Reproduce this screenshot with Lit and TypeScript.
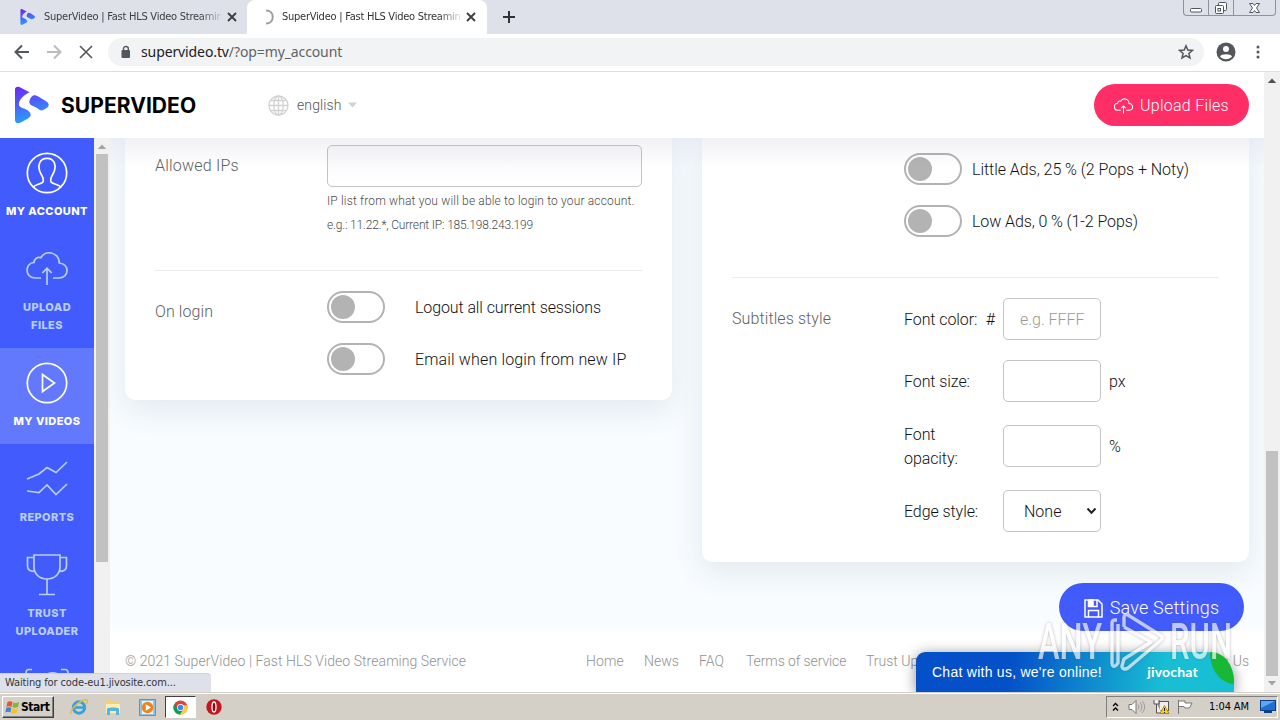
import { LitElement, html, css, svg } from "lit";
import { customElement, property } from "lit/decorators.js";

const logoMark = (id: string) => svg`
  <defs><linearGradient id=${id} gradientUnits="userSpaceOnUse" x1="8" y1="0" x2="18" y2="36">
    <stop offset="0" stop-color="#6a2cf5"/><stop offset=".5" stop-color="#4b64fb"/><stop offset="1" stop-color="#22a6fc"/>
  </linearGradient></defs>
  <path fill="url(#${id})" d="M0 3C0 .6 2.200-.4 4.500.5L15 6C9.500 8.500 4.500 13 4 18C4 22 9 22 13 24.500C17.500 28 17 31 12.500 33.500L6 37C2.500 38.600 0 37.500 0 34.500Z"/>
  <path fill="url(#${id})" d="M18.500 9.500C20.500 8.300 22 9.500 24 10.300L32 15.200C35.500 17.500 35.500 20.500 32.500 22.200C29 24.500 27 25.200 25 24C22 21 18 20.500 16 18.800C13.500 16.500 15 11.500 18.500 9.500Z"/>`;

const cloud = svg`
  <path d="M15 27H9.500C4.500 27 1 23.600 1 19.300C1 14.800 4 11.700 8 11.500C8.300 7.800 11.500 5.500 14.800 6.800C17.200 2.800 21 1.200 25 2C30 3 33 6.500 33.300 12C38.400 12.700 41 15.800 41 19.800C41 24 37.700 27 33 27H27"/>
  <path d="M21 34V17.500M16.300 22L21 17.300L25.700 22"/>`;

const sideIcons = {
  account: svg`<circle cx="21" cy="21" r="19.700"/><path d="M7 35C10 31.800 16.500 32.500 17.300 29C17.800 26 16.500 24.500 15 22C13 18.500 12.700 13.500 13.600 11C14.800 8 17.500 6.300 21 6.300S27.200 8 28.400 11C29.300 13.500 29 18.500 27 22C25.500 24.500 24.200 26 24.700 29C25.500 32.500 32 31.800 35 35"/>`,
  upload: svg`<g transform="translate(0 3)">${cloud}</g>`,
  videos: svg`<circle cx="21" cy="21" r="19.700"/><path d="M16.500 12.500L28.500 21L16.500 29.500Z"/>`,
  reports: svg`<path d="M1 21L13 16L21 9.500L30 14.500L41 4M1 33L13 34.500L21 27L30 36.500L41 26"/>`,
  trophy: svg`<path d="M8 1H34V13C34 20 28.500 25 21 25S8 20 8 13ZM8 3.500H1.500V12C1.500 15.500 4 17.500 9 17.500M34 3.500H40.500V12C40.500 15.500 38 17.500 33 17.500M21 25V40M13 40.500H29"/>`,
  scan: svg`<path d="M0 9V4.500C0 2.500 1 1.500 3 1.500H6M35 1.500H39C41 1.500 42 2.500 42 4.500V9M3 9C8 6 12 9 21 6S34 7 38 9"/>`,
};
type IconName = keyof typeof sideIcons;

@customElement("side-item")
class SideItem extends LitElement {
  @property() icon: IconName = "account";
  @property() label = "";
  @property({ type: Boolean }) bright = false;
  static styles = css`
    :host { display: flex; flex-direction: column; align-items: center; padding: 14px 0; gap: 8px; color: #b9ceff; flex: none; }
    :host([bright]) { color: #fff; }
    svg { width: 42px; height: 42px; fill: none; stroke: currentColor; stroke-width: 1.7; overflow: visible; }
    .label { font: 800 11px/18px Inter, sans-serif; letter-spacing: .42px; text-align: center; white-space: pre-line; }
  `;
  render() {
    return html`<svg viewBox="0 0 42 42">${sideIcons[this.icon]}</svg><div class="label">${this.label}</div>`;
  }
}

@customElement("toggle-row")
class ToggleRow extends LitElement {
  @property() label = "";
  @property({ type: Boolean }) wide = false;
  static styles = css`
    :host { display: flex; align-items: center; gap: 10px; height: 32px; white-space: nowrap; letter-spacing: -.04px; }
    :host([wide]) { gap: 30px; }
    .track { box-sizing: border-box; width: 58px; height: 32px; border: 2px solid #b3b3b3; border-radius: 16px; padding: 2px; background: #fff; flex: none; }
    .knob { width: 24px; height: 24px; border-radius: 50%; background: #b3b3b3; }
    .text { padding-top: 2px; }
  `;
  render() {
    return html`<div class="track"><div class="knob"></div></div><span class="text">${this.label}</span>`;
  }
}

@customElement("scroll-bar")
class ScrollBar extends LitElement {
  static styles = css`
    :host { display: flex; flex-direction: column; align-items: center; width: 16px; flex: none; background: #f1f1f1; }
    .arrow { width: 16px; height: 16px; flex: none; }
    .track { flex: 1; width: 12px; }
    .thumb { background: #c1c1c1; }
  `;
  @property({ type: Number }) from = 0;
  @property({ type: Number }) size = 0;
  @property() tone = "#505050";
  @property() endTone = "#a3a3a3";
  render() {
    return html`
      <svg class="arrow" viewBox="0 0 16 16"><path fill=${this.tone} d="M3.800 11L8 6.500L12.200 11Z"/></svg>
      <div class="track"><div style="height:${this.from}px"></div><div class="thumb" style="height:${this.size}px"></div></div>
      <svg class="arrow" viewBox="0 0 16 16"><path fill=${this.endTone} d="M3.800 5L8 9.500L12.200 5Z"/></svg>`;
  }
}

@customElement("browser-chrome")
class BrowserChrome extends LitElement {
  static styles = css`
    :host { display: block; height: 72px; flex: none; }
    .tabs { height: 34px; background: #dee1e9; display: flex; padding-left: 8px; position: relative; }
    .tab { box-sizing: border-box; width: 239px; height: 34px; display: flex; align-items: center; padding: 0 10px 0 12px; gap: 8px;
      font: 11px/16px "DejaVu Sans Condensed", "DejaVu Sans", sans-serif; letter-spacing: -.24px; color: #3c4043; }
    .tab.active { width: 240px; background: #fff; border-radius: 8px 8px 0 0; color: #303236; padding: 0 11px 0 15px; }
    .title { flex: 1; overflow: hidden; white-space: nowrap; -webkit-mask: linear-gradient(90deg, #000 88%, transparent 102%); mask: linear-gradient(90deg, #000 88%, transparent 102%); }
    .tab svg { flex: none; }
    .tab .title + svg { margin-left: -2px; }
    .plus { align-self: center; margin-left: 15px; }
    .win { position: absolute; right: 4px; top: 0; height: 16px; box-sizing: border-box; display: flex; border: 1px solid #8e929b; border-top: 0; border-radius: 0 0 4px 4px; }
    .win svg { display: block; height: 15px; }
    .win svg + svg { border-left: 1px solid #8e929b; }
    .bar { box-sizing: border-box; height: 38px; border-bottom: 1px solid #dcdde0; background: #fff; display: flex; align-items: center; padding: 0 14px 1px 14px; }
    .nav { display: flex; gap: 16px; margin-right: 14px; }
    .omni { box-sizing: border-box; flex: 1; height: 28px; border-radius: 14px; background: #f1f3f4; display: flex; align-items: center; padding: 0 10px 0 12px; gap: 9px;
      font: 14px/20px "Noto Sans", sans-serif; letter-spacing: -.11px; color: #5f6368; }
    .url { flex: 1; padding-bottom: 1px; }
    .host { color: #202124; }
    .user { margin: 0 14px 0 12px; }
  `;
  render() {
    const x = html`<svg width="10" height="10" viewBox="0 0 10 10" stroke="#3c4043" stroke-width="1.900"><path d="M1 1L9 9M9 1L1 9"/></svg>`;
    return html`
      <div class="tabs">
        <div class="tab">
          <svg width="16" height="16" viewBox="0 0 36 38">${logoMark("fav")}</svg>
          <span class="title">SuperVideo | Fast HLS Video Streaming</span>${x}
        </div>
        <div class="tab active">
          <svg width="12" height="16" viewBox="0 0 12 16" fill="none" stroke="#9aa0a6" stroke-width="2"><path d="M4 1.500C13 1.500 13 14.500 4 14.500"/></svg>
          <span class="title">SuperVideo | Fast HLS Video Streaming</span>${x}
        </div>
        <svg class="plus" width="14" height="14" viewBox="0 0 14 14" stroke="#303236" stroke-width="2"><path d="M7 1V13M1 7H13"/></svg>
        <div class="win">
          <svg width="24" viewBox="0 0 24 15" fill="#fff" stroke="#50545c"><rect x="6.500" y="8.500" width="11" height="3.500" rx="1"/></svg>
          <svg width="24" viewBox="0 0 24 15" fill="#fff" stroke="#50545c"><rect x="9.500" y="2.500" width="8" height="8" rx="1"/><rect x="6.500" y="5.500" width="8" height="8" rx="1"/><rect x="9" y="8.500" width="2.500" height="2.500"/></svg>
          <svg width="41" viewBox="0 0 41 15" fill="#fff" stroke="#50545c"><path d="M15.500 3.500H19L20.500 5.500L22 3.500H25.500L22.500 8L25.500 12.500H22L20.500 10.500L19 12.500H15.500L18.500 8Z"/></svg>
        </div>
      </div>
      <div class="bar">
        <div class="nav">
          <svg width="16" height="16" viewBox="0 0 16 16" fill="none" stroke="#53565a" stroke-width="2"><path d="M15 8H2M8 1.500L1.500 8L8 14.500"/></svg>
          <svg width="16" height="16" viewBox="0 0 16 16" fill="none" stroke="#b9bbbe" stroke-width="2"><path d="M1 8H14M8 1.500L14.500 8L8 14.500"/></svg>
          <svg width="16" height="16" viewBox="0 0 16 16" fill="none" stroke="#53565a" stroke-width="1.600"><path d="M2 2L14 14M14 2L2 14"/></svg>
        </div>
        <div class="omni">
          <svg width="12" height="14" viewBox="0 0 12 14"><rect x="1.500" y="5" width="8.500" height="8" rx="1" fill="#53565a"/><path d="M3.500 6V3.600C3.500 .8 8.300 .8 8.300 3.600V6" fill="none" stroke="#53565a" stroke-width="1.400"/></svg>
          <span class="url"><span class="host">supervideo.tv</span>/?op=my_account</span>
          <svg width="16" height="16" viewBox="0 0 16 16" fill="none" stroke="#53565a" stroke-width="1.500"><path d="M8 1.800L9.800 6L14.400 6.400L10.900 9.400L12 13.900L8 11.500L4 13.900L5.100 9.400L1.600 6.400L6.200 6Z"/></svg>
        </div>
        <svg class="user" width="20" height="20" viewBox="0 0 20 20"><circle cx="10" cy="10" r="9.500" fill="#53565a"/><circle cx="10" cy="7" r="3" fill="#fff"/><path d="M4 14.500C5 11.500 15 11.500 16 14.500C13 18 7 18 4 14.500Z" fill="#fff"/></svg>
        <svg width="16" height="16" viewBox="0 0 16 16" fill="#53565a"><circle cx="8" cy="3" r="1.500"/><circle cx="8" cy="8" r="1.500"/><circle cx="8" cy="13" r="1.500"/></svg>
      </div>`;
  }
}

@customElement("site-header")
class SiteHeader extends LitElement {
  static styles = css`
    :host { display: flex; align-items: center; height: 66px; flex: none; padding: 0 15px; background: #fff; font: 300 14px/20px Roboto, sans-serif; }
    .mark { width: 35px; height: 38px; margin-right: 11px; }
    .name { font: 700 21px/26px Inter, sans-serif; color: #000; width: 207px; padding-top: 2px; letter-spacing: .06px; }
    .lang { display: flex; align-items: center; flex: 1; color: #555; letter-spacing: .1px; }
    .globe { margin-right: 8px; }
    .caret { margin-left: 7px; }
    .upload { box-sizing: border-box; width: 155px; height: 42px; border-radius: 21px; background: #ff2e66; color: #fff; display: flex; align-items: center; justify-content: center; gap: 7px; font-size: 16px; letter-spacing: .25px; padding-top: 1px; }
    .caption { padding-top: 1px; }
  `;
  render() {
    return html`
      <svg class="mark" viewBox="0 0 36 38">${logoMark("brand")}</svg>
      <div class="name">SUPERVIDEO</div>
      <div class="lang">
        <svg class="globe" width="21" height="21" viewBox="0 0 21 21" fill="none" stroke="#d2d2d2" stroke-width="1.300"><circle cx="10.500" cy="10.500" r="9.500"/><ellipse cx="10.500" cy="10.500" rx="4.700" ry="9.500"/><path d="M1 10.500H20M10.500 1V20M2.500 5.500H18.500M2.500 15.500H18.500"/></svg>
        english
        <svg class="caret" width="9" height="6" viewBox="0 0 9 6"><path fill="#d2d2d2" d="M0 .5H9L4.500 5.500Z"/></svg>
      </div>
      <div class="upload"><svg width="19" height="16" viewBox="0 0 42 35" fill="none" stroke="#fff" stroke-width="2.400">${cloud}</svg><span class="caption">Upload Files</span></div>`;
  }
}

@customElement("settings-content")
class SettingsContent extends LitElement {
  static styles = css`
    :host { flex: 1; min-width: 0; display: flex; flex-direction: column; position: relative; overflow: hidden; font: 300 16px/24px Roboto, sans-serif; color: #111; background: #fff; }
    .shade { position: absolute; inset: 0 0 auto 0; height: 30px; background: linear-gradient(rgba(60, 60, 110, .07), rgba(60, 60, 110, 0)); }
    .body { box-sizing: border-box; height: 494px; background: linear-gradient(#f8fcff 97%, #fcfdff); position: relative; flex: none; }
    .cards { display: flex; align-items: flex-start; gap: 30px; padding: 0 15px; }
    .card { box-sizing: border-box; flex: 1; min-width: 0; padding: 7px 30px 25px; background: #fff; border-radius: 0 0 10px 10px; box-shadow: 0 10px 30px rgba(40, 55, 95, .1); }
    .card.second { padding: 15px 30px 30px; }
    .row { display: grid; grid-template-columns: 172px 1fr; }
    .label { color: #5f5f5f; letter-spacing: .1px; }
    .label.first { padding-top: 9px; letter-spacing: .22px; }
    .label.login { padding-top: 9px; }
    .input { box-sizing: border-box; height: 42px; border: 1px solid #c4c4c4; border-radius: 5px; background: #fff; display: flex; align-items: center; }
    .first-row .input { background: linear-gradient(#f8f8fb, #fff); }
    .help { font-size: 12px; color: #4a4a4a; padding-top: 2px; letter-spacing: .16px; white-space: nowrap; }
    .help .ip { letter-spacing: -.17px; }
    .line { height: 1px; background: #ebebeb; margin: 33px 0 20px; }
    .second .line { margin: 40px 0 20px; }
    .toggles { display: grid; gap: 20px; }
    .toggles .loose { letter-spacing: .15px; }
    .toggles .tight { letter-spacing: -.1px; }
    .fields { display: grid; gap: 20px; }
    .field { display: grid; grid-template-columns: 91px 98px auto; gap: 8px; align-items: center; }
    .name { display: flex; justify-content: space-between; letter-spacing: -.08px; padding-top: 2px; }
    .name.narrow { width: 60px; padding-top: 1px; margin-bottom: -1px; }
    .unit { padding-top: 2px; }
    .field .input { padding: 0 0 0 16px; }
    .hint { color: #999; letter-spacing: -.02px; padding-top: 2px; }
    .select { justify-content: space-between; }
    .select span { padding-top: 2px; }
    .select.input { padding: 0 3px 0 20px; }
    .save { box-sizing: border-box; width: 185px; height: 48px; margin: 21px 20px 0 auto; border-radius: 24px; background: #415bfd; color: #fff; display: flex; align-items: center; justify-content: center; gap: 7px; font-size: 18px; letter-spacing: .2px; padding-top: 2px; }
    .foot { display: flex; align-items: center; padding: 19px 15px 0; font-size: 14px; line-height: 20px; color: #929292; white-space: nowrap; }
    .copy { width: 461px; letter-spacing: .06px; }
    .home { width: 58px; letter-spacing: .15px; }
    .news { width: 55px; }
    .faq { width: 47px; }
    .terms { width: 120px; letter-spacing: -.1px; }
    .last { margin-left: auto; }
  `;
  render() {
    return html`
      <div class="body">
        <div class="cards">
          <div class="card">
            <div class="row first-row">
              <div class="label first">Allowed IPs</div>
              <div>
                <div class="input"></div>
                <div class="help">IP list from what you will be able to login to your account.<br><span class="ip">e.g.: 11.22.*, Current IP: 185.198.243.199</span></div>
              </div>
            </div>
            <div class="line"></div>
            <div class="row">
              <div class="label login">On login</div>
              <div class="toggles">
                <toggle-row wide class="tight" label="Logout all current sessions"></toggle-row>
                <toggle-row wide class="loose" label="Email when login from new IP"></toggle-row>
              </div>
            </div>
          </div>
          <div class="card second">
            <div class="row">
              <div></div>
              <div class="toggles">
                <toggle-row label="Little Ads, 25 % (2 Pops + Noty)"></toggle-row>
                <toggle-row class="tight" label="Low Ads, 0 % (1-2 Pops)"></toggle-row>
              </div>
            </div>
            <div class="line"></div>
            <div class="row">
              <div class="label login">Subtitles style</div>
              <div class="fields">
                <div class="field"><div class="name"><span>Font color:</span><span>#</span></div><div class="input"><span class="hint">e.g. FFFF</span></div></div>
                <div class="field"><div class="name">Font size:</div><div class="input"></div><span class="unit">px</span></div>
                <div class="field"><div class="name narrow">Font opacity:</div><div class="input"></div><span class="unit">%</span></div>
                <div class="field"><div class="name">Edge style:</div><div class="input select"><span>None</span>
                  <svg width="11" height="8" viewBox="0 0 11 8" fill="none" stroke="#222" stroke-width="2"><path d="M1.500 1.500L5.500 5.700L9.500 1.500"/></svg></div></div>
              </div>
            </div>
          </div>
        </div>
        <div class="save">
          <svg width="19" height="19" viewBox="0 0 19 19" fill="none" stroke="#fff" stroke-width="1.500"><path d="M1 1H14L18 5V18H1ZM4.500 1V7.500H13V1M4.500 18V11.500H14.500V18"/><path fill="#fff" d="M5 1H9V7H5Z"/></svg>
          Save Settings
        </div>
        <div class="shade"></div>
      </div>
      <div class="foot">
        <span class="copy">© 2021 SuperVideo | Fast HLS Video Streaming Service</span>
        <span class="home">Home</span><span class="news">News</span><span class="faq">FAQ</span><span class="terms">Terms of service</span><span>Trust Uploader</span><span class="last">Contact Us</span>
      </div>`;
  }
}

@customElement("chat-widget")
class ChatWidget extends LitElement {
  static styles = css`
    :host { position: absolute; left: 916px; top: 580px; width: 318px; height: 40px; box-sizing: border-box; display: flex; align-items: center; padding: 0 36px 0 16px;
      background: linear-gradient(100deg, #0450c8 30%, #18bfd4 78%); border-radius: 9px 28px 0 0; box-shadow: 0 2px 14px rgba(0, 0, 0, .45); color: #fff; font: 14px/20px "Liberation Sans", sans-serif; letter-spacing: .26px; }
    .text { flex: 1; }
    .brand { font: 700 14px/20px Lato, sans-serif; letter-spacing: .2px; }
    .leaf { position: absolute; right: 0; top: 0; }
  `;
  render() {
    return html`<span class="text">Chat with us, we're online!</span><span class="brand">jivochat</span>
      <svg class="leaf" width="24" height="34" viewBox="0 0 24 34"><path fill="#18b836" d="M0 0C14 0 24 12 24 32C10 31 0 18 0 0Z"/></svg>`;
  }
}

@customElement("water-mark")
class WaterMark extends LitElement {
  static styles = css`
    :host { position: absolute; left: 1030px; top: 536px; }
    svg { display: block; filter: drop-shadow(0 0 1.500px rgba(90, 90, 100, .6)); opacity: .66; overflow: visible; }
    text { font: 500 50px Roboto, sans-serif; fill: #fff; }
    path { fill: none; stroke: #fff; stroke-width: 3.4; stroke-linejoin: round; }
  `;
  render() {
    return html`<svg width="212" height="72" viewBox="0 0 212 72">
      <text x="8" y="51" textLength="64" lengthAdjust="spacingAndGlyphs">ANY</text>
      <text x="140" y="51" textLength="62" lengthAdjust="spacingAndGlyphs">RUN</text>
      <path d="M87 12H85C83 12 82 13 82 15V55C82 58 84 59 86 57.500L88 55V16M94 19V9C94 7 96 6 98 7L130 27C133 29 133 31 130 33L98 60C95 62 92 61 92 58L94 51L121 34L94 19"/></svg>`;
  }
}

@customElement("task-bar")
class TaskBar extends LitElement {
  static styles = css`
    :host { box-sizing: border-box; display: flex; align-items: center; height: 28px; flex: none; background: #d4d0c8; border-top: 1px solid #d4d0c8; box-shadow: inset 0 1px #fff; padding: 1px 2px 0 2px;
      font: 11px/16px "DejaVu Sans Condensed", "DejaVu Sans", sans-serif; color: #000; }
    .start { box-sizing: border-box; width: 52px; height: 22px; display: flex; align-items: center; gap: 1px; padding-left: 2px; border: 1px solid; border-color: #fff #404040 #404040 #fff; box-shadow: inset -1px -1px #808080; font-weight: 700; font-size: 12px; letter-spacing: -.45px; }
    .apps { display: flex; align-items: center; flex: 1; padding-left: 8px; }
    .app { width: 34px; height: 22px; display: grid; place-items: center; }
    .app.open { box-sizing: border-box; width: 31px; margin: 0 1px 0 1px; background: #fff; border: 1px solid; border-color: #404040 #fff #fff #404040; }
    .tray { box-sizing: border-box; width: 172px; height: 22px; display: flex; align-items: center; border: 1px solid; border-color: #808080 #fff #fff #808080; padding-left: 5px; gap: 7px; }
    .tray svg { flex: none; }
    .time { margin-left: 9px; width: 44px; letter-spacing: -.1px; }
  `;
  render() {
    return html`
      <div class="start">
        <svg width="15" height="15" viewBox="0 0 15 15"><path fill="#e8542b" d="M2.500 2C4.500.8 6 1.200 7.500 2L6.500 7C5 6 3 6 1.500 7Z"/><path fill="#7db83a" d="M8.300 2.400C10 3.200 12 3 14 2L13 7C11 8 9 8 7.300 7.300Z"/><path fill="#3d83d8" d="M1.300 7.800C3 7 5 7 6.300 7.900L5.400 12.500C4 11.600 2 11.700.4 12.500Z"/><path fill="#f7c02c" d="M7.100 8.200C9 9 11 9 12.800 8L11.800 12.700C10 13.700 8 13.700 6.100 12.900Z"/></svg>Start
      </div>
      <div class="apps">
        <div class="app"><svg width="18" height="18" viewBox="0 0 18 18" fill="none"><circle cx="9" cy="9.500" r="5.700" stroke="#39a0dc" stroke-width="3"/><path d="M5 9.500H15" stroke="#39a0dc" stroke-width="2.500"/><path d="M1 16C-1 12 12 0 17 2C18 3 17 5 16 6" stroke="#e8bb3a" stroke-width="1.500"/></svg></div>
        <div class="app"><svg width="18" height="18" viewBox="0 0 18 18"><path fill="#f1d279" d="M1 4L2 2H7L8 4H15V15H1Z"/><path fill="#fbeeb8" d="M2 6H16V15H2Z"/><path fill="#58b4d8" d="M3 17V11C3 9 15 9 15 11V17H12V13H6V17Z"/></svg></div>
        <div class="app"><svg width="17" height="17" viewBox="0 0 17 17"><rect x=".5" y=".5" width="16" height="16" fill="#8fc4ea" stroke="#5796c6"/><rect x="3" y="2" width="11" height="13" fill="#e8f4fc"/><circle cx="8.500" cy="8.500" r="5.800" fill="#f08416"/><path fill="#fff" d="M6.800 5.200L12 8.500L6.800 11.800Z"/></svg></div>
        <div class="app open"><svg width="15" height="15" viewBox="0 0 16 16"><circle cx="8" cy="8" r="7.500" fill="#db4437"/><path fill="#0f9d58" d="M1.500 4.300A7.500 7.500 0 0 0 7.500 15.500L11 10H5Z"/><path fill="#ffcd40" d="M15 5.500A7.500 7.500 0 0 1 7.500 15.500L11.500 9L10 5.500Z"/><circle cx="8" cy="8" r="3.700" fill="#fff"/><circle cx="8" cy="8" r="2.900" fill="#4285f4"/></svg></div>
        <div class="app"><svg width="16" height="16" viewBox="0 0 16 16"><circle cx="8" cy="8" r="7.700" fill="#c41620"/><ellipse cx="8" cy="8" rx="2" ry="5" fill="#8c0a12" stroke="#fff" stroke-width="1.300"/></svg></div>
      </div>
      <div class="tray">
        <svg width="7" height="10" viewBox="0 0 7 10" fill="none" stroke="#000" stroke-width="1.300"><path d="M1 4L3.500 1.500L6 4M1 8.500L3.500 6L6 8.500"/></svg>
        <svg width="20" height="16" viewBox="-2 0 20 16" fill="none" stroke="#777"><path fill="#fff" d="M1 5.500H4L8 1.500V14.500L4 10.500H1Z"/><path stroke="#999" d="M10 5.500C11.300 7 11.300 9 10 10.500M12 3.500C14.500 6 14.500 10 12 12.500M14 2C17.500 5.500 17.500 10.500 14 14"/></svg>
        <svg width="17" height="16" viewBox="0 0 17 16" fill="#eee" stroke="#555"><rect x="6" y="2.500" width="9.500" height="9"/><path d="M1 1V5H6V1M3.500 5V14H9"/><path fill="#ffd21e" stroke="#b8860b" d="M11.500 6.500L16 14.500H7Z"/><path stroke="#222" d="M11.500 9V12M11.500 13V14"/></svg>
        <svg width="16" height="16" viewBox="0 0 16 16" fill="#fff" stroke="#777"><path d="M1.500 1V15M1.500 2H8V4H15L12.500 9H8L7 7.500H1.500"/></svg>
        <div class="time">1:04 AM</div>
        <svg width="16" height="14" viewBox="0 0 16 14"><rect x=".5" y=".5" width="15" height="10" fill="#1f6fd0" stroke="#0b3f8a"/><path fill="#5aa9f0" d="M1 1H15L1 8Z"/><path fill="#0b3f8a" d="M4 11H12V13H4Z"/></svg>
      </div>`;
  }
}

@customElement("app-root")
class AppRoot extends LitElement {
  static styles = css`
    :host { display: flex; flex-direction: column; width: 1280px; height: 720px; overflow: hidden; background: #fff; }
    .view { height: 620px; display: flex; position: relative; overflow: hidden; flex: none; }
    .site { flex: 1; min-width: 0; display: flex; flex-direction: column; }
    .columns { display: flex; flex: 1; min-height: 0; }
    .side { width: 94px; flex: none; background: #415bfd; overflow: hidden; display: flex; flex-direction: column; }
    .selected { background: #6279fe; }
    .status { position: absolute; left: 0; bottom: 0; box-sizing: border-box; width: 211px; height: 19px; padding: 0 0 0 5px; background: #dee1e9; border-radius: 0 4px 0 0; border-top: 1px solid #cfd2d9;
      font: 11px/18px "DejaVu Sans Condensed", "DejaVu Sans", sans-serif; letter-spacing: -.12px; color: #33363a; }
  `;
  render() {
    return html`
      <browser-chrome></browser-chrome>
      <div class="view">
        <div class="site">
          <site-header></site-header>
          <div class="columns">
            <div class="side">
              <side-item bright icon="account" label="MY ACCOUNT"></side-item>
              <side-item icon="upload" .label=${"UPLOAD\nFILES"}></side-item>
              <side-item bright class="selected" icon="videos" label="MY VIDEOS"></side-item>
              <side-item icon="reports" label="REPORTS"></side-item>
              <side-item icon="trophy" .label=${"TRUST\nUPLOADER"}></side-item>
              <side-item icon="scan"></side-item>
            </div>
            <scroll-bar .from=${0} .size=${408} tone="#a3a3a3"></scroll-bar>
            <settings-content></settings-content>
          </div>
        </div>
        <scroll-bar .from=${363} .size=${225}></scroll-bar>
        <chat-widget></chat-widget>
        <water-mark></water-mark>
        <div class="status">Waiting for code-eu1.jivosite.com...</div>
      </div>
      <task-bar></task-bar>`;
  }
}
